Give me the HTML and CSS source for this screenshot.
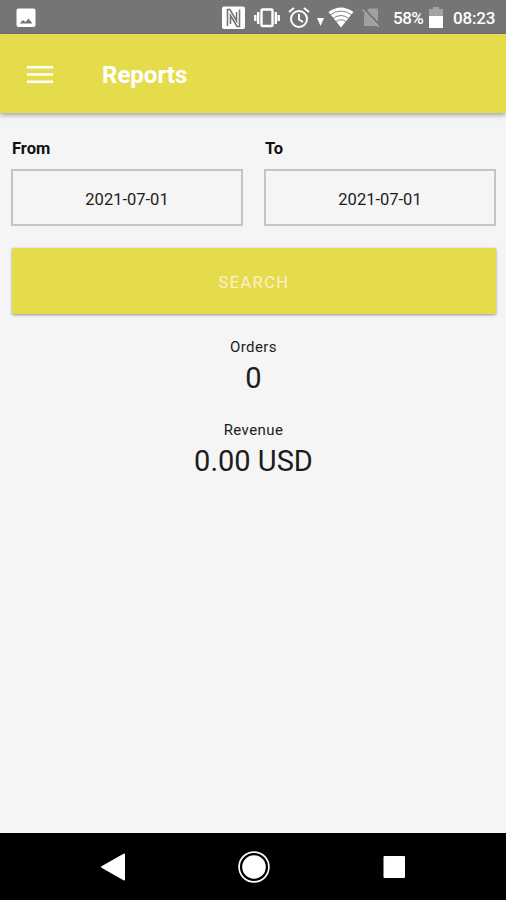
FILE: index.html
```html
<!DOCTYPE html>
<html lang="en">
<head>
  <meta charset="UTF-8">
  <title>Reports</title>
  <link rel="stylesheet" href="styles.css">
</head>
<body>
  <div class="status-bar">
    <svg class="icon-image" width="20" height="20" viewBox="0 0 20 20">
      <path fill="#fff" fill-rule="evenodd" d="M2.500 0.500h15a2 2 0 0 1 2 2v14.500a2 2 0 0 1-2 2h-15a2 2 0 0 1-2-2v-14.500a2 2 0 0 1 2-2zM3.500 15.500h13l-4-5-3 3.500-2.500-2z"/>
    </svg>
    <svg class="icon-nfc" width="23" height="24" viewBox="0 0 23 24">
      <rect x="0" y="0.500" width="23" height="22.500" rx="2" fill="#fff"/>
      <path fill="none" stroke="#757575" stroke-width="1.600" d="M5.500 20V3.500H8L14.500 15V6M17.500 3.500v17H15L8.500 9.500V18"/>
    </svg>
    <svg class="icon-vibrate" width="26" height="22" viewBox="0 0 26 22">
      <rect x="7.500" y="2.500" width="11" height="16.500" rx="1" fill="none" stroke="#fff" stroke-width="2.400"/>
      <path stroke="#fff" stroke-width="2.400" d="M4.200 5v12M21.800 5v12M1.300 8v6M24.700 8v6"/>
    </svg>
    <svg class="icon-alarm" width="22" height="22" viewBox="0 0 22 22">
      <g fill="none" stroke="#fff" stroke-width="2">
        <circle cx="11" cy="12" r="8"/>
        <path d="M1 5l5-4M21 5l-5-4M11 7v5.500l4 2.500"/>
      </g>
    </svg>
    <svg class="icon-arrow" width="7" height="8" viewBox="0 0 7 8">
      <path fill="#fff" d="M0 0h7L3.500 8z"/>
    </svg>
    <svg class="icon-wifi" width="26" height="21" viewBox="0 0 26 21">
      <path fill="#fff" d="M0.500 5Q13-4 25.500 5L13 20.500z"/>
      <path fill="none" stroke="#757575" stroke-width="0.900" d="M2 8Q13 0 24 8M5 11.500Q13 5.500 21 11.500M8 14.500Q13 11 18 14.500"/>
    </svg>
    <svg class="icon-sim" width="18" height="20" viewBox="0 0 18 20">
      <path fill="#a0a0a0" d="M7 0.500h9v17.500H2V6z"/>
      <path stroke="#757575" stroke-width="2" d="M2 0.500l16 17"/>
      <path stroke="#a8a8a8" stroke-width="1.500" d="M0.500 1.500l16.500 17.500"/>
    </svg>
    <span class="battery-level">58%</span>
    <svg class="icon-battery" width="14" height="21" viewBox="0 0 14 21">
      <path fill="#a3a3a3" d="M4 0h6v2h4v8H0V2h4z"/>
      <path fill="#fff" d="M0 9h14v12H0z"/>
    </svg>
    <span class="clock">08:23</span>
  </div>

  <header class="app-bar">
    <svg class="menu-icon" width="26" height="18" viewBox="0 0 26 18">
      <path stroke="#fff" stroke-width="2.600" d="M0 1.300h26M0 8.500h26M0 15.700h26"/>
    </svg>
    <h1 class="title">Reports</h1>
  </header>

  <main class="content">
    <div class="date-row">
      <div class="date-field">
        <div class="date-label">From</div>
        <div class="date-box">2021-07-01</div>
      </div>
      <div class="date-field">
        <div class="date-label">To</div>
        <div class="date-box">2021-07-01</div>
      </div>
    </div>
    <button class="search-button">SEARCH</button>
    <div class="stat">
      <div class="stat-label">Orders</div>
      <div class="stat-value">0</div>
    </div>
    <div class="stat">
      <div class="stat-label">Revenue</div>
      <div class="stat-value">0.00 USD</div>
    </div>
  </main>

  <nav class="nav-bar">
    <svg width="26" height="30" viewBox="0 0 26 30">
      <path fill="#fff" stroke="#fff" stroke-width="2" stroke-linejoin="round" d="M2 15L24 2.500v25z"/>
    </svg>
    <svg width="32" height="32" viewBox="0 0 32 32">
      <circle cx="16" cy="16" r="14.900" fill="none" stroke="#fff" stroke-width="1.700"/>
      <circle cx="16" cy="16" r="11.800" fill="#fff"/>
    </svg>
    <svg width="26" height="22" viewBox="0 0 26 22">
      <rect x="2.500" y="0" width="21.500" height="22" rx="1" fill="#fff"/>
    </svg>
  </nav>
</body>
</html>
```
FILE: styles.css
```css
* {
  box-sizing: border-box;
}

body {
  margin: 0;
  height: 900px;
  display: flex;
  flex-direction: column;
  background-color: #f5f5f5;
  color: #1c1c1c;
  font-family: Roboto, sans-serif;
}

svg {
  display: block;
  flex: none;
}

/* Android status bar */
.status-bar {
  height: 34px;
  display: flex;
  align-items: center;
  padding: 1px 11px 0 16px;
  background-color: #757575;
  color: #fff;
  font-size: 17px;
  font-weight: 500;
}

.icon-nfc {
  margin-left: auto;
}

.icon-vibrate {
  margin-left: 9px;
}

.icon-alarm {
  margin-left: 8px;
}

.icon-arrow {
  margin: 8px 4px 0 7px;
}

.icon-sim {
  margin-left: 8px;
}

.battery-level {
  width: 31px;
  margin-left: 13px;
  letter-spacing: -0.5px;
}

.icon-battery {
  margin-left: 5px;
}

.clock {
  width: 42px;
  margin-left: 10px;
  letter-spacing: -0.2px;
}

.app-bar {
  height: 79px;
  display: flex;
  align-items: center;
  padding: 2px 27px 0;
  background-color: #e5dc4c;
  box-shadow: 0 2px 5px rgba(0, 0, 0, 0.35);
}

.title {
  margin: 0 0 0 49px;
  color: #fff;
  font-size: 24px;
  font-weight: 700;
}

.content {
  flex: 1;
  padding: 25px 10px 0 11px;
}

.date-row {
  display: grid;
  grid-template-columns: 1fr 1fr;
  gap: 21px;
}

.date-label {
  height: 31px;
  padding-left: 1px;
  color: #111;
  font-size: 16.500px;
  font-weight: 700;
  line-height: 21px;
}

.date-box {
  height: 57px;
  display: flex;
  align-items: center;
  justify-content: center;
  padding-top: 3px;
  border: 2px solid #c4c4c4;
  font-size: 16.500px;
}

.search-button {
  display: block;
  width: calc(100% - 1px);
  height: 66px;
  margin: 22px 0 0 1px;
  padding: 2px 0 0;
  border: none;
  border-radius: 1px;
  background-color: #e5dc4c;
  box-shadow: 0 1px 3px rgba(0, 0, 0, 0.4);
  color: #fbf0cf;
  font-family: inherit;
  font-size: 16.500px;
  letter-spacing: 1.400px;
}

.stat {
  height: 83px;
  text-align: center;
}

.search-button + .stat {
  margin-top: 23px;
}

.stat-label {
  font-size: 15px;
  line-height: 20px;
  letter-spacing: 0.4px;
}

.stat-value {
  font-size: 29px;
  line-height: 43px;
}

/* Android navigation buttons */
.nav-bar {
  height: 67px;
  display: flex;
  align-items: center;
  justify-content: space-between;
  padding: 0 99px 0 100px;
  background-color: #000;
}
```
